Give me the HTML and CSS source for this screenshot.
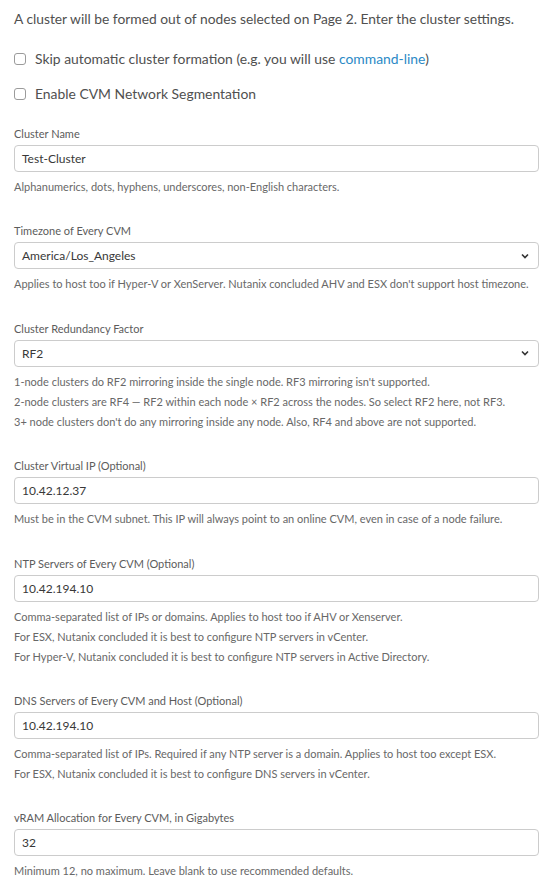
FILE: index.html
```html
<!DOCTYPE html>
<html>
<head>
<meta charset="utf-8">
<link rel="stylesheet" href="styles.css">
</head>
<body>
<div class="page">
  <p class="intro">A cluster will be formed out of nodes selected on Page 2. Enter the cluster settings.</p>
  <div class="checks">
    <label class="check"><input type="checkbox" class="cb"><span>Skip automatic cluster formation (e.g. you will use <a class="link">command-line</a>)</span></label>
    <label class="check"><input type="checkbox" class="cb"><span>Enable CVM Network Segmentation</span></label>
  </div>

  <div class="field">
    <div class="label">Cluster Name</div>
    <div class="box">Test-Cluster</div>
    <div class="help">
      <div>Alphanumerics, dots, hyphens, underscores, non-English characters.</div>
    </div>
  </div>

  <div class="field">
    <div class="label">Timezone of Every CVM</div>
    <div class="box select">America/Los_Angeles<svg class="chev" width="8" height="6" viewBox="0 0 8 6"><path d="M1 1.5 L4 4.5 L7 1.5" fill="none" stroke="#333" stroke-width="1.6"/></svg></div>
    <div class="help">
      <div>Applies to host too if Hyper-V or XenServer. Nutanix concluded AHV and ESX don't support host timezone.</div>
    </div>
  </div>

  <div class="field">
    <div class="label">Cluster Redundancy Factor</div>
    <div class="box select">RF2<svg class="chev" width="8" height="6" viewBox="0 0 8 6"><path d="M1 1.5 L4 4.5 L7 1.5" fill="none" stroke="#333" stroke-width="1.6"/></svg></div>
    <div class="help">
      <div>1-node clusters do RF2 mirroring inside the single node. RF3 mirroring isn't supported.</div>
      <div>2-node clusters are RF4 — RF2 within each node × RF2 across the nodes. So select RF2 here, not RF3.</div>
      <div>3+ node clusters don't do any mirroring inside any node. Also, RF4 and above are not supported.</div>
    </div>
  </div>

  <div class="field">
    <div class="label">Cluster Virtual IP (Optional)</div>
    <div class="box">10.42.12.37</div>
    <div class="help">
      <div>Must be in the CVM subnet. This IP will always point to an online CVM, even in case of a node failure.</div>
    </div>
  </div>

  <div class="field">
    <div class="label">NTP Servers of Every CVM (Optional)</div>
    <div class="box">10.42.194.10</div>
    <div class="help">
      <div>Comma-separated list of IPs or domains. Applies to host too if AHV or Xenserver.</div>
      <div>For ESX, Nutanix concluded it is best to configure NTP servers in vCenter.</div>
      <div>For Hyper-V, Nutanix concluded it is best to configure NTP servers in Active Directory.</div>
    </div>
  </div>

  <div class="field">
    <div class="label">DNS Servers of Every CVM and Host (Optional)</div>
    <div class="box">10.42.194.10</div>
    <div class="help">
      <div>Comma-separated list of IPs. Required if any NTP server is a domain. Applies to host too except ESX.</div>
      <div>For ESX, Nutanix concluded it is best to configure DNS servers in vCenter.</div>
    </div>
  </div>

  <div class="field">
    <div class="label">vRAM Allocation for Every CVM, in Gigabytes</div>
    <div class="box">32</div>
    <div class="help">
      <div>Minimum 12, no maximum. Leave blank to use recommended defaults.</div>
    </div>
  </div>
</div>
</body>
</html>
```
FILE: styles.css
```css
html, body {
  margin: 0;
  padding: 0;
  background: #ffffff;
}
body {
  font-family: "Lato", "Open Sans", sans-serif;
  color: #4f4f4f;
}
.page {
  width: 525px;
  padding: 9px 0 0 14px;
}
.intro {
  margin: 0;
  font-size: 13.8px;
  line-height: 20px;
  color: #505050;
  white-space: nowrap;
}
.checks {
  display: flex;
  flex-direction: column;
  gap: 15px;
  margin-top: 20px;
}
.check {
  display: flex;
  align-items: center;
  gap: 9px;
  font-size: 13.9px;
  line-height: 20px;
  color: #505050;
}
.cb {
  appearance: none;
  -webkit-appearance: none;
  margin: 0;
  width: 12px;
  height: 12px;
  border: 1px solid #9b9b9b;
  border-radius: 3px;
  background: #fff;
  flex: none;
}
.link {
  color: #2b8ac6;
}
.field {
  margin-top: 22px;
}
.field + .field {
  margin-top: 26.4px;
}
.label {
  font-size: 11px;
  line-height: 16px;
  color: #5c5c5c;
  margin-bottom: 3px;
}
.box {
  box-sizing: border-box;
  height: 27px;
  border: 1px solid #cccccc;
  border-radius: 4px;
  padding: 0 7px;
  display: flex;
  align-items: center;
  justify-content: space-between;
  font-size: 12px;
  color: #383838;
}
.chev {
  margin-right: 2px;
}
.help {
  margin-top: 5px;
  font-size: 11px;
  line-height: 20px;
  color: #686868;
}
```
